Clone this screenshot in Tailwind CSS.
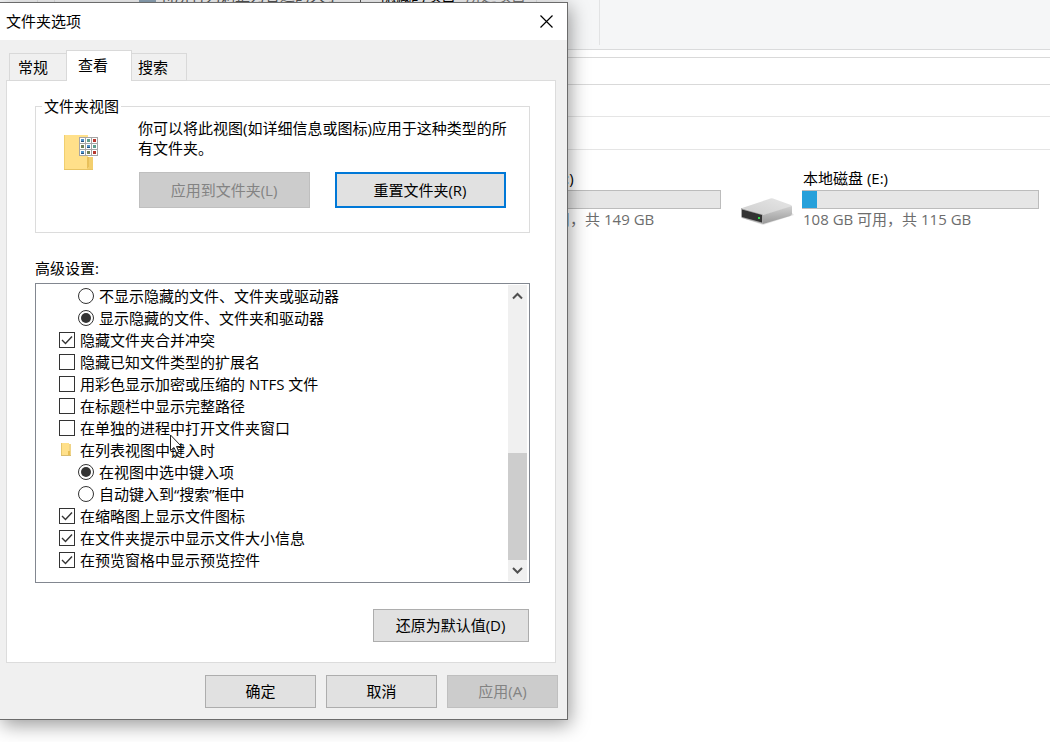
<!DOCTYPE html>
<html lang="zh-CN">
<head>
  <meta charset="UTF-8">
  <meta name="viewport" content="width=device-width, initial-scale=1.0">
  <title>文件夹选项</title>
  <script src="https://cdn.jsdelivr.net/npm/@tailwindcss/browser@4"></script>
</head>
<body class="relative min-h-screen overflow-hidden bg-white font-['Open_Sans','Noto_Sans_CJK_SC',sans-serif] text-[15px] leading-5 text-black">

  <!-- explorer window -->
  <main>
    <div class="flex h-[50px] border-b border-[#dadbdc] bg-[#f5f6f7]">
      <div class="flex w-[600px] shrink-0 mb-1 border-r border-[#e2e3e4] overflow-hidden">
        <div class="flex -mt-[15px] h-5 whitespace-nowrap">
          <span class="w-[38px] border-r border-[#e2e3e4]"></span>
          <span class="w-[17px] border-r border-[#e2e3e4]"></span>
          <span class="ml-[84px] w-[17px] h-[17px] bg-[#8fa6b8]"></span>
          <span class="ml-1 w-[180px] text-[#555]">将所有列调整为合适的大小</span>
          <span class="ml-5 w-px bg-[#555]"></span>
          <span class="ml-5 w-[75px]">隐藏的项目</span>
          <span class="ml-[10px] w-[60px] text-[#777]">所选项目</span>
          <span class="w-[11px] border-r border-[#e2e3e4]"></span>
        </div>
      </div>
    </div>
    <div class="h-2 border-b border-[#d9d9d9]"></div>
    <div class="h-[27px] border-b border-[#d9d9d9]"></div>
    <div class="h-8 border-b border-[#e5e5e5]"></div>
    <div class="h-[33px] border-b border-[#e5e5e5]"></div>

    <section class="flex gap-5 pl-[423px] pt-[18px]">
      <div class="flex gap-2">
        <div class="w-[53px]"></div>
        <div class="w-[237px]">
          <div class="pl-[2px]">本地磁盘 (D:)</div>
          <div class="h-[19px] mt-[2px] border border-[#bcbcbc] bg-[#e6e6e6]"></div>
          <div class="pl-[2px] text-[#6d6d6d]">132 GB 可用，共 149 GB</div>
        </div>
      </div>
      <div class="flex gap-2">
        <svg class="mt-[27px] h-[32px] w-[53px]" viewBox="0 0 53 32">
          <defs>
            <linearGradient id="top" x1="0" y1="1" x2="1" y2="0">
              <stop offset="0" stop-color="#cfcfcf"/><stop offset="1" stop-color="#e6e6e6"/>
            </linearGradient>
            <linearGradient id="side" x1="0" y1="0" x2="0" y2="1">
              <stop offset="0" stop-color="#d2d2d2"/><stop offset="1" stop-color="#999"/>
            </linearGradient>
          </defs>
          <path d="M4 24 22 30 53 20 50 17z" fill="#e4e4e4"/>
          <path d="M1 13 28 4Q30 3 32 3.500L50 10Q51.500 11 50 12L23 20z" fill="url(#top)"/>
          <path d="M22 20 51 11V18.500Q51 20 49 21L22 29z" fill="url(#side)"/>
          <path d="M0 13 22 19.500V29L1 23Q0 22.500 0 21z" fill="#aaa"/>
          <path d="M1 14.500 21 20V27.500L1 22z" fill="#333"/>
          <rect x="17" y="22" width="2" height="2" fill="#2fe04a"/>
        </svg>
        <div class="w-[237px]">
          <div class="pl-px">本地磁盘 (E:)</div>
          <div class="h-[19px] mt-[2px] border border-l-0 border-[#bcbcbc] bg-[#e6e6e6]">
            <div class="h-full w-[15px] bg-[#26a0da]"></div>
          </div>
          <div class="pl-px text-[#6d6d6d]">108 GB 可用，共 115 GB</div>
        </div>
      </div>
    </section>
  </main>

  <!-- folder options dialog -->
  <div role="dialog" aria-labelledby="dlg-title" class="absolute left-0 top-[2px] w-[568px] border border-l-0 border-[#6b6b6b] bg-[#f0f0f0] shadow-[2px_5px_18px_rgba(0,0,0,0.4)]">
    <header class="flex h-[37px] items-center justify-between bg-white pb-px pl-[6px] pr-[14px]">
      <h1 id="dlg-title">文件夹选项</h1>
      <button type="button" aria-label="关闭">
        <svg class="size-[13px]" viewBox="0 0 13 13" fill="none" stroke="#000" stroke-width="1.200"><path d="M.5.5l12 12M12.500.5l-12 12"/></svg>
      </button>
    </header>

    <nav class="relative z-10 -mb-px flex items-end pl-[9px] pt-[10px]">
      <button type="button" class="h-7 w-[57px] border border-r-0 border-[#d9d9d9] pr-[10px]">常规</button>
      <button type="button" class="h-[31px] w-[66px] border border-b-0 border-[#d9d9d9] bg-white pb-[2px] pr-3">查看</button>
      <button type="button" class="h-7 w-[55px] border border-l-0 border-[#d9d9d9] pr-3">搜索</button>
    </nav>

    <div class="ml-[6px] mr-[11px] h-[583px] border border-[#dcdcdc] bg-white px-7 pt-[15px] pr-[25px]">
      <fieldset class="h-[137px] border border-[#dcdcdc]">
        <legend class="ml-[6px] px-[2px]">文件夹视图</legend>
        <div class="flex gap-10 pl-[27px] pt-[2px]">
          <svg class="mt-4 h-[37px] w-[35px] shrink-0" viewBox="0 0 35 37">
            <path d="M1 1h24v22h5v13H1z" fill="#ffe08a"/>
            <path d="M1 1h1v35H1z" fill="#f0cf70"/>
            <path d="M24 23h2v10l-2 2z" fill="#e8c05a"/>
            <path d="M26 23h4v13h-6l2-3z" fill="#f3cf6e"/>
            <path d="M1 35.500h29" stroke="#e8c463"/>
            <rect x="16" y="3" width="19" height="19" fill="#a6a6a6"/>
            <g fill="#fff">
              <path d="M17 4h5v5h-5zM23 4h5v5h-5zM29 4h5v5h-5zM17 10h5v5h-5zM23 10h5v5h-5zM29 10h5v5h-5zM17 16h5v5h-5zM23 16h5v5h-5zM29 16h5v5h-5z"/>
            </g>
            <path d="M18 5h3v3h-3zM24 11h3v3h-3zM18 17h3v3h-3z" fill="#4d8fc9"/>
            <path d="M24 5h3v3h-3zM30 11h3v3h-3z" fill="#5d9d8c"/>
            <path d="M30 5h3v3h-3zM30 17h3v3h-3z" fill="#b8382f"/>
            <path d="M18 11h3v3h-3zM24 17h3v3h-3z" fill="#6c7f58"/>
            <path d="M18 7h3v1h-3zM24 13h3v1h-3zM18 19h3v1h-3z" fill="#24507c"/>
          </svg>
          <div>
            <p class="w-[376px]">你可以将此视图(如详细信息或图标)应用于这种类型的所有文件夹。</p>
            <div class="mt-[14px] ml-px flex gap-[25px]">
              <button type="button" disabled class="h-9 w-[171px] border border-[#bfbfbf] bg-[#ccc] pr-px text-[#838383]">应用到文件夹(L)</button>
              <button type="button" class="h-9 w-[171px] border-2 border-[#0078d7] bg-[#e1e1e1] pr-px">重置文件夹(R)</button>
            </div>
          </div>
        </div>
      </fieldset>

      <h2 id="adv" class="mt-[25px]">高级设置:</h2>
      <div role="group" aria-labelledby="adv" class="mt-[5px] flex h-[300px] border border-[#828790] py-px pr-[2px]">
        <div class="flex-1 pl-[23px] leading-[22px]">
          <label class="flex h-[22px] items-center gap-[5px] pl-[19px]">
            <input type="radio" name="hidden" class="size-4 appearance-none rounded-full border border-[#333] bg-clip-content p-[2px] checked:bg-[#333]">不显示隐藏的文件、文件夹或驱动器
          </label>
          <label class="flex h-[22px] items-center gap-[5px] pl-[19px]">
            <input type="radio" name="hidden" checked class="size-4 appearance-none rounded-full border border-[#333] bg-clip-content p-[2px] checked:bg-[#333]">显示隐藏的文件、文件夹和驱动器
          </label>
          <label class="flex h-[22px] items-center gap-[5px]">
            <span class="grid size-4">
              <input type="checkbox" checked class="peer col-start-1 row-start-1 size-4 appearance-none border border-[#333]">
              <svg class="pointer-events-none invisible col-start-1 row-start-1 size-4 peer-checked:visible" viewBox="0 0 16 16" fill="none" stroke="#333" stroke-width="1.400"><path d="M3 8l3.500 3.500 6.500-7"/></svg>
            </span>隐藏文件夹合并冲突
          </label>
          <label class="flex h-[22px] items-center gap-[5px]">
            <input type="checkbox" class="size-4 appearance-none border border-[#333]">隐藏已知文件类型的扩展名
          </label>
          <label class="flex h-[22px] items-center gap-[5px]">
            <input type="checkbox" class="size-4 appearance-none border border-[#333]">用彩色显示加密或压缩的 NTFS 文件
          </label>
          <label class="flex h-[22px] items-center gap-[5px]">
            <input type="checkbox" class="size-4 appearance-none border border-[#333]">在标题栏中显示完整路径
          </label>
          <label class="flex h-[22px] items-center gap-[5px]">
            <input type="checkbox" class="size-4 appearance-none border border-[#333]">在单独的进程中打开文件夹窗口
          </label>
          <div class="flex h-[22px] items-center gap-[5px]">
            <svg class="size-4" viewBox="0 0 16 16">
              <path d="M2 1h8v8h2v5H2z" fill="#ffe08a"/>
              <path d="M10 2h2v12h-2z" fill="#f0d487"/>
              <path d="M2 1h1v13H2z" fill="#e6c66c"/>
              <path d="M9 9h2v4l-2 1z" fill="#e8bf55"/>
              <path d="M2 13.500h10" stroke="#d9bd72"/>
            </svg>在列表视图中键入时
          </div>
          <label class="flex h-[22px] items-center gap-[5px] pl-[19px]">
            <input type="radio" name="typing" checked class="size-4 appearance-none rounded-full border border-[#333] bg-clip-content p-[2px] checked:bg-[#333]">在视图中选中键入项
          </label>
          <label class="flex h-[22px] items-center gap-[5px] pl-[19px]">
            <input type="radio" name="typing" class="size-4 appearance-none rounded-full border border-[#333] bg-clip-content p-[2px] checked:bg-[#333]">自动键入到“搜索”框中
          </label>
          <label class="flex h-[22px] items-center gap-[5px]">
            <span class="grid size-4">
              <input type="checkbox" checked class="peer col-start-1 row-start-1 size-4 appearance-none border border-[#333]">
              <svg class="pointer-events-none invisible col-start-1 row-start-1 size-4 peer-checked:visible" viewBox="0 0 16 16" fill="none" stroke="#333" stroke-width="1.400"><path d="M3 8l3.500 3.500 6.500-7"/></svg>
            </span>在缩略图上显示文件图标
          </label>
          <label class="flex h-[22px] items-center gap-[5px]">
            <span class="grid size-4">
              <input type="checkbox" checked class="peer col-start-1 row-start-1 size-4 appearance-none border border-[#333]">
              <svg class="pointer-events-none invisible col-start-1 row-start-1 size-4 peer-checked:visible" viewBox="0 0 16 16" fill="none" stroke="#333" stroke-width="1.400"><path d="M3 8l3.500 3.500 6.500-7"/></svg>
            </span>在文件夹提示中显示文件大小信息
          </label>
          <label class="flex h-[22px] items-center gap-[5px]">
            <span class="grid size-4">
              <input type="checkbox" checked class="peer col-start-1 row-start-1 size-4 appearance-none border border-[#333]">
              <svg class="pointer-events-none invisible col-start-1 row-start-1 size-4 peer-checked:visible" viewBox="0 0 16 16" fill="none" stroke="#333" stroke-width="1.400"><path d="M3 8l3.500 3.500 6.500-7"/></svg>
            </span>在预览窗格中显示预览控件
          </label>
        </div>
        <!-- scrollbar -->
        <div class="flex w-[19px] flex-col bg-[#f0f0f0]">
          <svg class="h-[22px] w-full" viewBox="0 0 19 22" fill="none" stroke="#505050" stroke-width="2"><path d="M5 13.500 9.500 9l4.500 4.500"/></svg>
          <div class="flex-1"></div>
          <div class="h-[107px] bg-[#cdcdcd]"></div>
          <svg class="h-[21px] w-full" viewBox="0 0 19 21" fill="none" stroke="#505050" stroke-width="2"><path d="M5 8l4.500 4.500L14 8"/></svg>
        </div>
      </div>

      <div class="mt-[26px] mr-px flex justify-end">
        <button type="button" class="h-[33px] w-[156px] border border-[#adadad] bg-[#e1e1e1] pb-[2px] pr-px">还原为默认值(D)</button>
      </div>
    </div>

    <footer class="flex justify-end gap-[10px] pb-[11px] pr-[9px] pt-3">
      <button type="button" class="h-[33px] w-[111px] border border-[#adadad] bg-[#e1e1e1] pb-[2px]">确定</button>
      <button type="button" class="h-[33px] w-[111px] border border-[#adadad] bg-[#e1e1e1] pb-[2px]">取消</button>
      <button type="button" disabled class="h-[33px] w-[111px] border border-[#bfbfbf] bg-[#ccc] pb-[2px] text-[#838383]">应用(A)</button>
    </footer>
  </div>

  <!-- mouse pointer -->
  <svg class="pointer-events-none absolute left-[170px] top-[434px] h-[20px] w-[14px]" viewBox="0 0 14 20" fill="#fff" stroke="#222"><path d="M.5 1v15.500l3.500-3 2.500 5.500 2.500-1-2.500-5.500h5z"/></svg>
</body>
</html>
